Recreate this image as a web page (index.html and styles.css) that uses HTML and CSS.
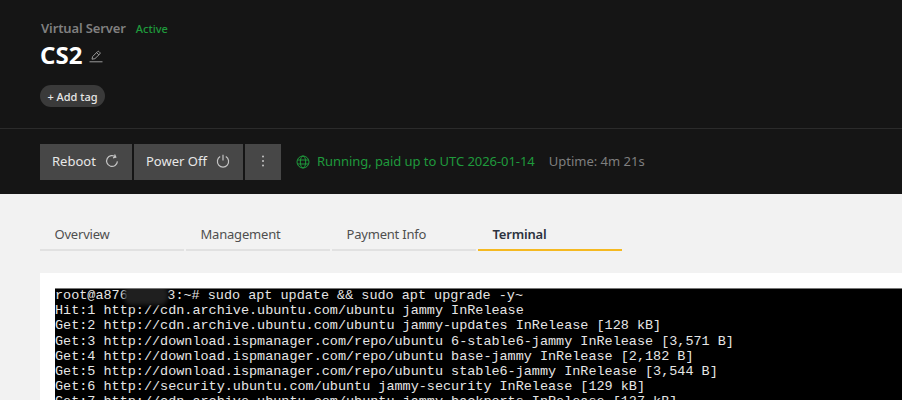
FILE: index.html
```html
<!DOCTYPE html>
<html lang="en">
<head>
<meta charset="utf-8">
<title>CS2</title>
<link rel="stylesheet" href="styles.css">
</head>
<body>
<header class="hero">
  <section class="summary">
    <div class="eyebrow"><span class="kind">Virtual Server</span><span class="state">Active</span></div>
    <div class="title-row">
      <h1>CS2</h1>
      <svg class="edit" viewBox="0 0 14 14" width="14" height="14" fill="none" stroke="#9a9a9a" stroke-width="1"><path d="M3 10.2l.6-2.6L8.6 2.6a1 1 0 0 1 1.4 0l.9.9a1 1 0 0 1 0 1.4L5.9 9.7z"/><path d="M7.6 3.6l2.3 2.3"/><path d="M.5 12.8h13"/></svg>
    </div>
    <button class="tag">+ Add tag</button>
  </section>
  <section class="actions">
    <button class="btn">Reboot
      <svg viewBox="0 0 14 14" width="14" height="14" fill="none" stroke="#c4c4c4" stroke-width="1.2"><path d="M10.6 3A5.4 5.4 0 1 0 12.4 7.4"/><path d="M9.6.6l1.2 2.6-2.8.7"/></svg>
    </button>
    <button class="btn">Power Off
      <svg viewBox="0 0 14 14" width="14" height="14" fill="none" stroke="#c4c4c4" stroke-width="1.2"><path d="M4.2 2.6a5.6 5.6 0 1 0 5.6 0"/><path d="M7 .8v5.6"/></svg>
    </button>
    <button class="btn more" aria-label="More">
      <svg viewBox="0 0 4 14" width="4" height="14" fill="#c4c4c4"><circle cx="2" cy="2.5" r="1"/><circle cx="2" cy="7" r="1"/><circle cx="2" cy="11.5" r="1"/></svg>
    </button>
    <svg class="globe" viewBox="0 0 14 14" width="14" height="14" fill="none" stroke="#1f9a3c" stroke-width="1"><circle cx="7" cy="7" r="6"/><ellipse cx="7" cy="7" rx="2.7" ry="6"/><path d="M1.4 5h11.2M1.4 9h11.2"/></svg>
    <span class="running">Running, paid up to UTC 2026-01-14</span>
    <span class="uptime">Uptime: 4m 21s</span>
  </section>
</header>
<main class="content">
  <nav class="tabs">
    <a class="tab">Overview</a>
    <a class="tab">Management</a>
    <a class="tab">Payment Info</a>
    <a class="tab active">Terminal</a>
  </nav>
  <section class="card">
    <div class="terminal">
<pre>root@a876<span class="redact"></span>3:~# sudo apt update &amp;&amp; sudo apt upgrade -y~
Hit:1 http://cdn.archive.ubuntu.com/ubuntu jammy InRelease
Get:2 http://cdn.archive.ubuntu.com/ubuntu jammy-updates InRelease [128 kB]
Get:3 http://download.ispmanager.com/repo/ubuntu 6-stable6-jammy InRelease [3,571 B]
Get:4 http://download.ispmanager.com/repo/ubuntu base-jammy InRelease [2,182 B]
Get:5 http://download.ispmanager.com/repo/ubuntu stable6-jammy InRelease [3,544 B]
Get:6 http://security.ubuntu.com/ubuntu jammy-security InRelease [129 kB]
Get:7 http://cdn.archive.ubuntu.com/ubuntu jammy-backports InRelease [127 kB]</pre>
    </div>
  </section>
</main>
</body>
</html>
```
FILE: styles.css
```css
* { box-sizing: border-box; }
html, body { margin: 0; height: 400px; overflow: hidden; }
body { background: #f2f2f2; font-family: "Noto Sans", "Open Sans", sans-serif; }

.hero { background: #151515; height: 194px; }
.summary { height: 129px; padding: 20px 40px 0 41px; border-bottom: 1px solid #2b2b2b; }
.eyebrow { display: flex; align-items: center; gap: 10px; height: 16px; }
.kind { font-size: 13px; font-weight: 600; color: #808080; letter-spacing: -0.12px; }
.state { font-size: 11px; font-weight: 500; color: #1f9a3c; }
.title-row { display: flex; align-items: center; gap: 7px; height: 30px; margin-top: 4px; }
h1 { margin: 0 0 0 -1px; font-size: 24px; font-weight: 700; color: #fff; line-height: 30px; }
.edit { margin-top: 1px; }
.tag { display: block; margin: 15px 0 0 -1px; height: 22px; width: 65px; padding: 0; border: 0; border-radius: 11px;
  background: #3a3a3a; color: #e6e6e6; font: 500 11px "Noto Sans", sans-serif; }

.actions { display: flex; align-items: center; height: 65px; padding: 1px 40px 0; }
.btn { display: flex; align-items: center; justify-content: space-between; height: 36px; border: 0; padding: 0 13px 2px 12px;
  background: #474747; color: #e8e8e8; font: 400 13px "Noto Sans", sans-serif; margin-right: 2px; }
.btn:nth-child(1) { width: 92px; }
.btn:nth-child(2) { width: 109px; }
.more { width: 36px; justify-content: center; padding: 0 0 2px; margin-right: 15px; }
.globe { margin-top: -1px; }
.running { margin: -2px 0 0 7px; font-size: 13px; color: #1f9a3c; letter-spacing: -0.06px; }
.uptime { margin: -2px 0 0 14px; font-size: 13px; color: #7f7f7f; }

.content { padding: 0 0 0 40px; }
.tabs { display: flex; gap: 2px; height: 57px; padding-top: 26px; }
.tab { width: 144px; height: 31px; padding: 0 14.5px; font-size: 13px; line-height: 29px; color: #4f4f4f; border-bottom: 2px solid #e1e1e1; letter-spacing: -0.2px; }
.active { font-weight: 600; color: #2d3340; border-bottom-color: #f5b921; }
.card { margin-top: 22px; background: #fff; height: 140px; padding: 15px 0 0 15px; }
.terminal { background: #000; height: 125px; overflow: hidden; border-top: 1px solid #777; }
pre { margin: -1px 0 0; color: #e6e6e6; font: 13.48px/15.2px "Liberation Mono", monospace; }
.redact { display: inline-block; width: 44px; height: 20px; margin: -3px -0.4px -3px -4px; vertical-align: top; background: #1f1f1f; border-radius: 8px; filter: blur(2px); }
```
